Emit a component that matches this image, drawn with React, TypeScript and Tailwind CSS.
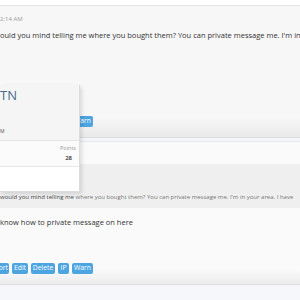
import React from "react";

const Btn = ({ children, className = "" }: { children: React.ReactNode; className?: string }) => (
  <span className={`flex items-center h-[11px] bg-[#4ca4e0] text-white text-[6.8px] leading-none rounded-[2px] ${className}`}>
    {children}
  </span>
);

const Buttons = () => (
  <div className="flex gap-[3px]">
    <Btn className="rounded-l-none w-[9px] overflow-hidden justify-end pr-[1px]">ort</Btn>
    <Btn className="w-[16px] justify-center">Edit</Btn>
    <Btn className="w-[24px] justify-center">Delete</Btn>
    <Btn className="w-[11px] justify-center">IP</Btn>
    <Btn className="w-[21px] justify-center">Warn</Btn>
  </div>
);

export default function App() {
  return (
    <div
      className="relative w-[300px] h-[300px] overflow-hidden bg-[#f6f7fb] text-[#333]"
      style={{ fontFamily: '"Open Sans", "Liberation Sans", sans-serif' }}
    >
      <div className="h-[6px] bg-white border-b border-[#e4e4e4]" />
      {/* post 1 */}
      <div className="h-[131px] bg-gradient-to-b from-[#f7f7f7] from-85% to-[#e9e9e9] flex flex-col">
        <div className="pt-[9px] text-[6px] leading-[8px] text-[#9a9a9a]">2:14 AM</div>
        <div className="pt-[6px] text-[7.5px] leading-[12px] whitespace-nowrap overflow-hidden">
          ould you mind telling me where you bought them? You can private message me. I'm in
        </div>
        <div className="mt-auto mb-[10px]">
          <Buttons />
        </div>
      </div>
      <div className="h-[5px] bg-[#f3f5fb] border-t border-[#dcdcdc] border-b border-b-[#e6e8ee]" />
      {/* post 2 */}
      <div className="h-[143px] bg-gradient-to-b from-[#fafafa] from-90% to-[#ececec] flex flex-col border-b border-[#dedede]">
        <div className="h-[22px]" />
        <div className="h-[44px] bg-[#efefef] flex items-end pb-[7px]">
          <div className="text-[6px] leading-[8px] whitespace-nowrap overflow-hidden text-[#777]">
            <span className="text-[#444]">would you mind telling me</span> where you bought them? You can private message me. I'm in your area. I have
          </div>
        </div>
        <div className="pt-[8px] text-[7.5px] leading-[12px] whitespace-nowrap">know how to private message on here</div>
        <div className="mt-auto mb-[10px]">
          <Buttons />
        </div>
      </div>

      {/* member card popup */}
      <div className="absolute left-0 top-[85px] w-[80px] h-[107px] bg-white border-r border-b border-[#dcdcdc] shadow-[2px_2px_4px_rgba(0,0,0,0.12)] flex flex-col">
        <div className="h-[56px] bg-[#f5f5f5] border-b border-[#e4e4e4] flex flex-col">
          <div className="pt-[2px] text-[13px] leading-[16px] text-[#4a6b8d]">TN</div>
          <div className="mt-auto pb-[6px] text-[5px] leading-[6px] text-[#555]">M</div>
        </div>
        <div className="h-[26px] bg-[#fbfbfb] border-b border-[#e6e6e6] flex flex-col items-end pr-[3px] pt-[4px]">
          <div className="text-[5.5px] leading-[7px] text-[#999]">Points</div>
          <div className="text-[6px] leading-[8px] font-bold text-[#555] pr-[4px] pt-[2px]">28</div>
        </div>
      </div>
    </div>
  );
}
